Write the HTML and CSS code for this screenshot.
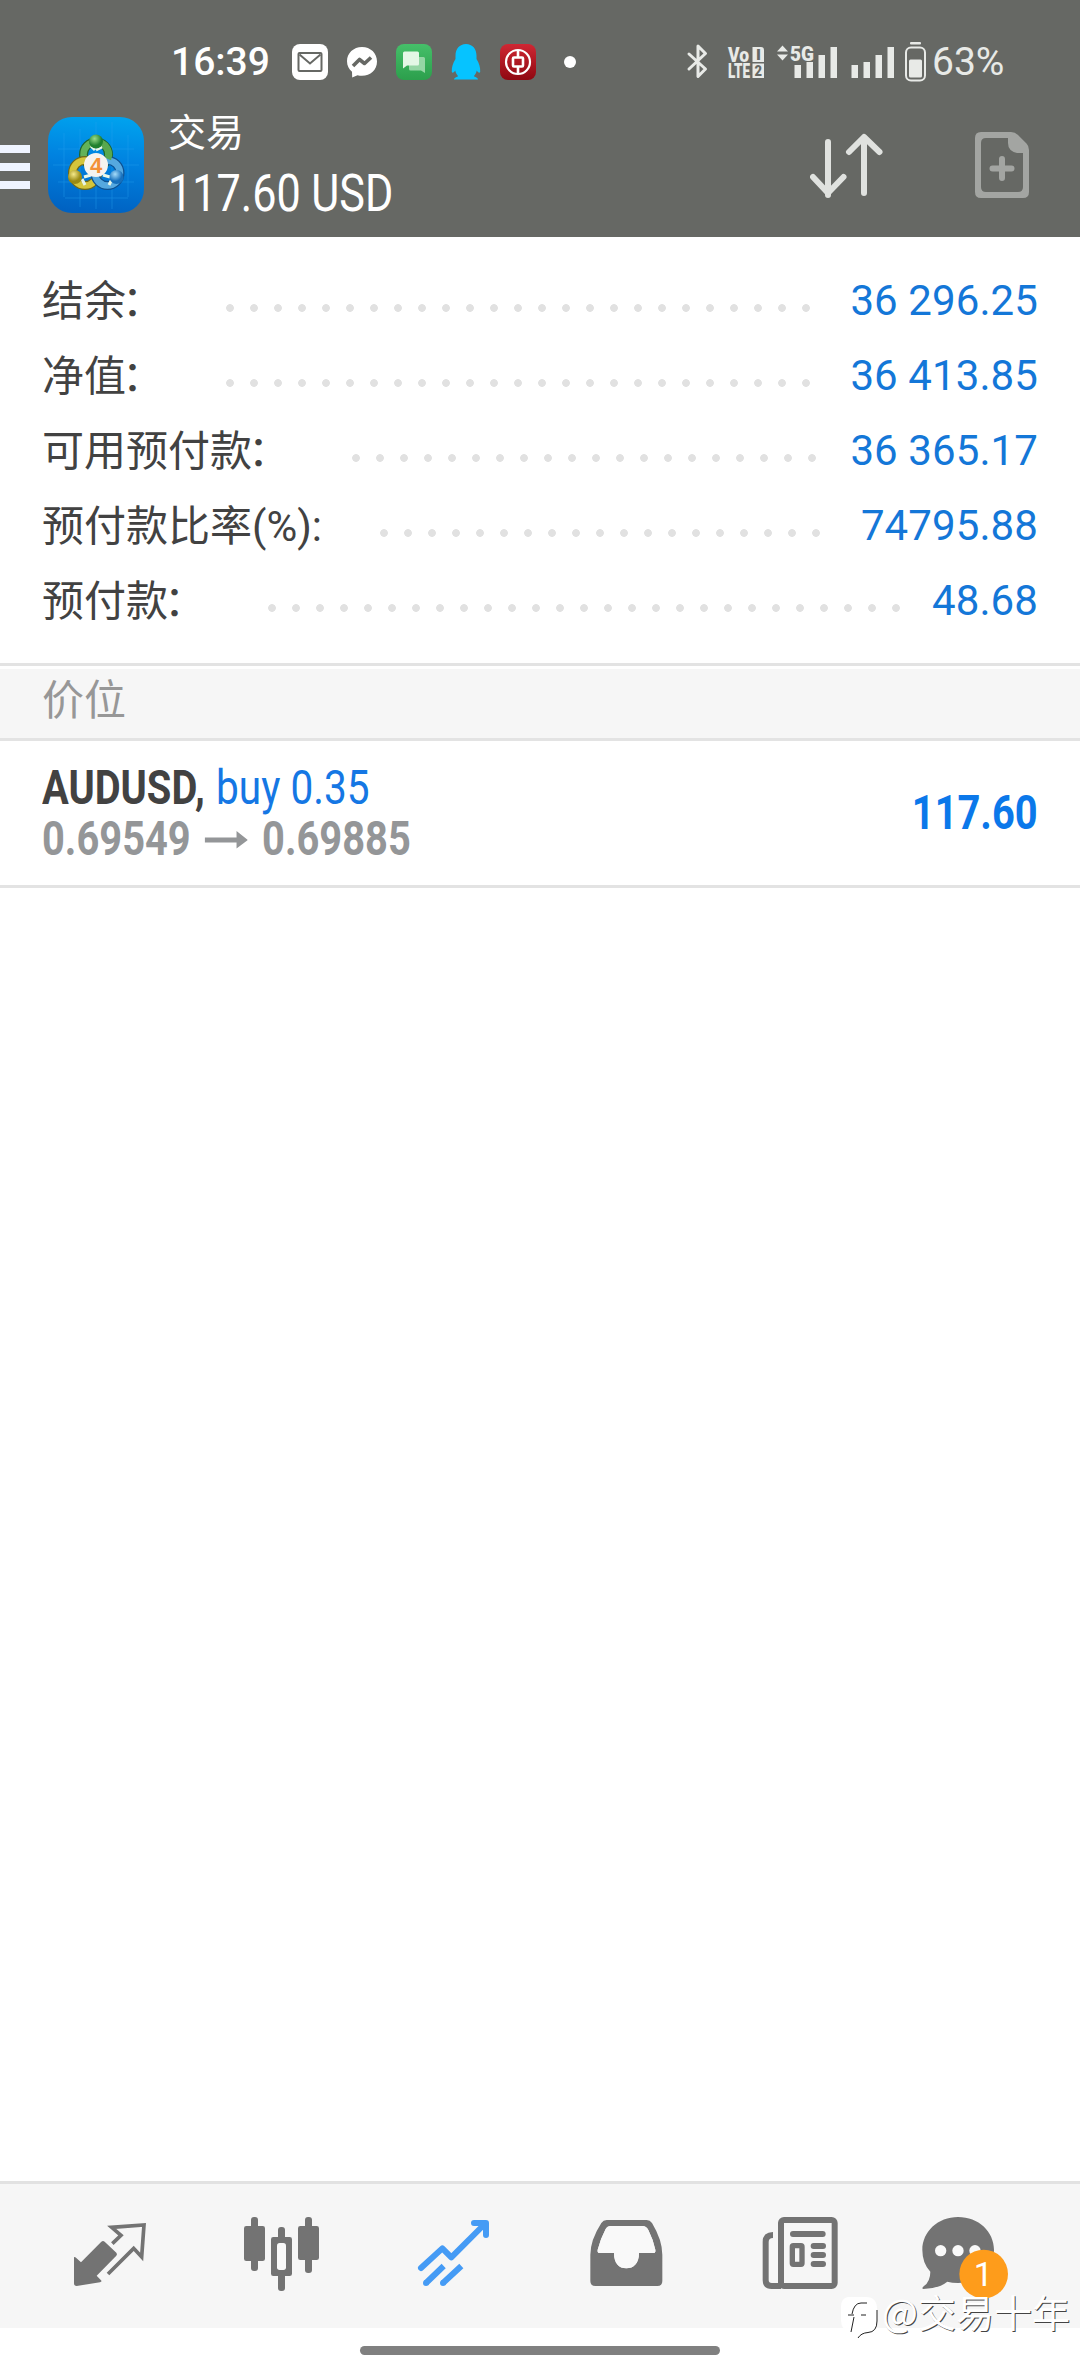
FILE: index.html
```html
<!DOCTYPE html>
<html lang="zh-CN">
<head>
<meta charset="utf-8">
<title>交易</title>
<link rel="stylesheet" href="styles.css">
</head>
<body>
<div class="screen">
  <header class="header">
    <div class="status">
      <div class="status-left">
        <span class="clock">16:39</span>
        <svg class="app-ico" viewBox="0 0 36 36"><rect width="36" height="36" rx="8" fill="#fff"/><rect x="6.5" y="9" width="23" height="18" rx="1" fill="none" stroke="#666864" stroke-width="2"/><path d="M7.500 10.500L18 19.500L28.500 10.500" fill="none" stroke="#666864" stroke-width="2"/></svg>
        <svg class="app-ico" viewBox="0 0 36 36"><path d="M18 3C9.500 3 3 9.200 3 17.200c0 4.600 2.100 8 5 10.600L8.200 33.500l5.300-2.300c1.400.4 3 .6 4.500.6 8.500 0 15-6.200 15-14.400S26.500 3 18 3z" fill="#fff"/><path d="M9 22L15.500 15.500L20.500 19.500L27 13.500" fill="none" stroke="#666864" stroke-width="3.600" stroke-linejoin="round"/></svg>
        <svg class="app-ico" viewBox="0 0 36 36"><defs><linearGradient id="chat" x1="0" y1="0" x2="0" y2="1"><stop offset="0" stop-color="#45bf69"/><stop offset="1" stop-color="#2c9f4c"/></linearGradient></defs><rect width="36" height="36" rx="8" fill="url(#chat)"/><path d="M13 13h14.500a1.500 1.500 0 0 1 1.500 1.500V29l-4-2.500H14.500a1.500 1.500 0 0 1-1.500-1.500z" fill="#95d6a5"/><path d="M8.500 7.500h13A1.500 1.500 0 0 1 23 9v11a1.500 1.500 0 0 1-1.500 1.500H11L7 24.500V9a1.500 1.500 0 0 1 1.500-1.500z" fill="#e4f7e6"/></svg>
        <svg class="app-ico" viewBox="0 0 36 36"><path d="M18 0C11.500 0 7.500 5 7.500 11.500v3.500C5 19 3.500 23 3.800 28c.8 1.500 2.200.5 3.400-1.500.6 2.400 1.600 4.200 3 5.700-2.500.8-4.200 1.800-4.200 3.300h24c0-1.500-1.700-2.500-4.200-3.300 1.400-1.500 2.400-3.300 3-5.700 1.200 2 2.600 3 3.400 1.500.3-5-1.200-9-3.700-13v-3.500C28.500 5 24.500 0 18 0z" fill="#06c3ff"/></svg>
        <svg class="app-ico" viewBox="0 0 36 36"><defs><linearGradient id="bank" x1="0" y1="0" x2="0" y2="1"><stop offset="0" stop-color="#cf2733"/><stop offset="1" stop-color="#8f0811"/></linearGradient></defs><rect width="36" height="36" rx="8" fill="url(#bank)"/><g fill="none" stroke="#fff"><circle cx="18" cy="18" r="12" stroke-width="2.200"/><rect x="13" y="13.500" width="10" height="9" rx="1" stroke-width="2.600"/><path d="M18 6V13M18 23V30" stroke-width="2.600"/></g></svg>
        <i class="more-dot"></i>
      </div>
      <div class="status-right">
        <svg class="signals" viewBox="0 0 242 42" fill="#e8eae7">
          <path d="M3 13L19.500 28L12 35.500V5L19.500 12.500L3 28" fill="none" stroke="#e8eae7" stroke-width="3" stroke-linejoin="round" stroke-linecap="round"/>
          <g class="tiny">
            <text x="42" y="20.500" font-size="20" textLength="21" lengthAdjust="spacingAndGlyphs">Vo</text>
            <text x="42" y="37" font-size="20" textLength="22" lengthAdjust="spacingAndGlyphs">LTE</text>
            <path d="M66.500 6H75q3 0 3 3V21H66.500zM66.500 22.500H78V37H66.500z"/>
            <text x="70" y="19" font-size="15" fill="#666864" textLength="5" lengthAdjust="spacingAndGlyphs">I</text>
            <text x="68.500" y="35" font-size="15" fill="#666864" textLength="7.500" lengthAdjust="spacingAndGlyphs">2</text>
            <text x="104" y="20" font-size="21" textLength="24" lengthAdjust="spacingAndGlyphs">5G</text>
          </g>
          <path d="M91 10.500L96.500 4.500L102 10.500zM91 13.500L96.500 19.500L102 13.500z"/>
          <path d="M108.500 24h6.500v13h-6.500zM120.500 21h6.500v16h-6.500zM132.500 14h6.500v23h-6.500zM144.500 6h6.500v31h-6.500z"/>
          <path d="M165.500 24h6.500v13h-6.500zM177.500 21h6.500v16h-6.500zM189.500 14h6.500v23h-6.500zM201.500 6h6.500v31h-6.500z"/>
          <rect x="224" y="1" width="11" height="2.500" rx="1"/><rect x="220" y="6.500" width="19" height="33" rx="5" fill="none" stroke="#e8eae7" stroke-width="2"/><rect x="223" y="18.500" width="13" height="18" rx="1.500"/>
        </svg>
        <span class="battery">63%</span>
      </div>
    </div>
    <div class="toolbar">
      <div class="burger"><i></i><i></i><i></i></div>
      <svg class="logo" viewBox="0 0 96 96">
        <defs>
          <linearGradient id="lg" x1=".6" y1="0" x2=".5" y2="1"><stop offset="0" stop-color="#00a2ee"/><stop offset=".45" stop-color="#0082e0"/><stop offset="1" stop-color="#0062c2"/></linearGradient>
          <radialGradient id="gr" cx=".4" cy=".3"><stop offset="0" stop-color="#9bdc8a"/><stop offset="1" stop-color="#20802e"/></radialGradient>
          <radialGradient id="ye" cx=".4" cy=".3"><stop offset="0" stop-color="#f5e98a"/><stop offset="1" stop-color="#9a8a14"/></radialGradient>
          <radialGradient id="bl" cx=".4" cy=".3"><stop offset="0" stop-color="#a5dcfa"/><stop offset="1" stop-color="#1670bd"/></radialGradient>
        </defs>
        <rect width="96" height="96" rx="24" fill="url(#lg)"/>
        <path d="M16 16V80M32 12V90M48 5V92M64 5V92M80 18V80M10 32H86M5 48H91M10 65H86M17 81H80" stroke="#27a3f0" stroke-width=".7" opacity=".55"/>
        <g fill="none">
          <circle cx="48" cy="37.500" r="12.500" stroke="#1e642c" stroke-width="9"/><circle cx="48" cy="37.500" r="12.500" stroke="#62b258" stroke-width="6.500"/>
          <circle cx="37" cy="56" r="12.500" stroke="#706818" stroke-width="9"/><circle cx="37" cy="56" r="12.500" stroke="#d4c53c" stroke-width="6.500"/>
          <circle cx="59.500" cy="56" r="12.500" stroke="#0d5090" stroke-width="9"/><circle cx="59.500" cy="56" r="12.500" stroke="#55a8df" stroke-width="6.500"/>
          <path d="M48 25A12.500 12.500 0 0 1 60 42" stroke="#58a84e" stroke-width="6.500"/>
          <path d="M47 33l-4-4M48 33l6-3M34 62l3 6M36 60l7-2M62 60l-7-2M64 62l-3 6" stroke="#e8f6e8" stroke-width="3"/>
        </g>
        <circle cx="48" cy="24.500" r="7" fill="url(#gr)"/><circle cx="27" cy="60" r="7" fill="url(#ye)"/><circle cx="68.500" cy="60" r="7" fill="url(#bl)"/>
        <circle cx="48" cy="48" r="12" fill="#f6f3ef"/>
        <text x="42" y="56" class="logo-num">4</text>
      </svg>
      <div class="titles">
        <div class="title">交易</div>
        <div class="total"><span class="narrow">117.60 USD</span></div>
      </div>
      <svg class="act-sort" viewBox="0 0 76 70" fill="none" stroke="#e0e2df" stroke-width="6" stroke-linecap="round" stroke-linejoin="round"><path d="M18 11V64M3 46L18 62L33.500 46M54 62V8M39 21L54 6L69.500 21"/></svg>
      <svg class="act-new" viewBox="0 0 54 66"><path fill="#a3a5a2" fill-rule="evenodd" d="M6 0H36Q40 0 43 3L51.500 11.500Q54 14 54 18V60Q54 66 48 66H6Q0 66 0 60V6Q0 0 6 0zM11 6Q6 6 6 11V55Q6 60 11 60H43Q48 60 48 55V21H42Q33 19 33 11V6z"/><path d="M27 27V46M17.500 36.500H36.500" stroke="#a3a5a2" stroke-width="6" stroke-linecap="round"/></svg>
    </div>
  </header>

  <section class="summary">
    <div class="row"><span class="label">结余<span class="colon">：</span></span><i class="leader"></i><span class="value">36 296.25</span></div>
    <div class="row"><span class="label">净值<span class="colon">：</span></span><i class="leader"></i><span class="value">36 413.85</span></div>
    <div class="row"><span class="label">可用预付款<span class="colon">：</span></span><i class="leader"></i><span class="value">36 365.17</span></div>
    <div class="row"><span class="label">预付款比率(%):</span><i class="leader"></i><span class="value">74795.88</span></div>
    <div class="row"><span class="label">预付款<span class="colon">：</span></span><i class="leader"></i><span class="value">48.68</span></div>
  </section>

  <div class="section-head">价位</div>

  <div class="position">
    <div class="deal">
      <div class="line symbol"><b class="narrow">AUDUSD,</b><span class="narrow buy">buy 0.35</span></div>
      <div class="line narrow prices"><b>0.69549</b><svg class="arrow" viewBox="0 0 42 18" preserveAspectRatio="none"><path d="M0 6.500H31V0L42 9L31 17.500V11.500H0z" fill="#949698"/></svg><b>0.69885</b></div>
    </div>
    <b class="profit narrow">117.60</b>
  </div>

  <nav class="tabs">
    <svg class="tab" viewBox="-108 -78 516 432" fill="#737373"><path d="M42 142Q44 139 48 143L63 157L124 95Q129 91 134 95L169 128Q173 132 169 137L110 197L123 211Q127 215 120 217L50 228Q42 228 42 220z"/><path d="M157 101L183 76L155 52L252 45L245 141L221 115L144 192" fill="none" stroke="#737373" stroke-width="11"/></svg>
    <svg class="tab" viewBox="408 -78 516 432" fill="#737373"><rect x="573" y="21" width="21" height="162" rx="9"/><rect x="552" y="48" width="63" height="105" rx="7"/><rect x="654" y="51" width="21" height="192" rx="9"/><rect x="633" y="81" width="63" height="117" rx="7"/><rect x="651" y="99" width="27" height="81" rx="8" fill="#f9f9f9"/><rect x="735" y="21" width="21" height="168" rx="9"/><rect x="714" y="48" width="63" height="102" rx="7"/></svg>
    <svg class="tab" viewBox="924 -78 516 432" fill="none" stroke="#459bf5" stroke-width="18"><path d="M1083 174L1147 115L1174 142L1274 42M1242 39H1278V75" stroke-linecap="round" stroke-linejoin="round"/><path d="M1098 219L1151 168M1149 219L1204 168"/><path d="M1098 219h.1M1149 219h.1" stroke-linecap="round"/></svg>
    <svg class="tab" viewBox="-120 -48 516 432"><path fill="#737373" fill-rule="evenodd" d="M80 60H200Q210 60 216 69Q247 120 247 165V243Q247 258 232 258H46Q31 258 31 243V165Q31 120 64 69Q70 60 80 60zM92 78Q82 78 77 87Q62 115 53 149Q51 159 60 159H102C102 190 117 205 139 205C161 205 177 190 177 159H219Q228 159 226 149Q220 120 205 90Q199 78 187 78z"/><path fill="#f9f9f9" d="M92 78Q82 78 77 87Q62 115 53 149Q51 159 60 159H102C102 190 117 205 139 205C161 205 177 190 177 159H219Q228 159 226 149Q220 120 205 90Q199 78 187 78z"/></svg>
    <svg class="tab" viewBox="396 -48 516 432" fill="none" stroke="#737373" stroke-width="18"><path d="M579 105Q557 105 557 126V240Q557 258 575 258H603"/><rect x="603" y="60" width="161" height="198" rx="9"/><path d="M639 102H728M701 138H729M701 165H729M701 192H729" stroke-linecap="round"/><rect x="637" y="137" width="29" height="56" rx="3" stroke-width="16"/></svg>
    <svg class="tab" viewBox="912 -48 516 432"><path fill="#737373" d="M1134 51C1196 51 1242 95 1242 150C1242 205 1196 249 1134 249Q1116 249 1102 245Q1075 266 1030 267Q1024 266 1031 259Q1051 245 1051 215Q1027 190 1027 150C1027 95 1074 51 1134 51z"/><circle cx="1082" cy="152" r="17" fill="#f9f9f9"/><circle cx="1134" cy="152" r="17" fill="#f9f9f9"/><circle cx="1185" cy="152" r="17" fill="#f9f9f9"/><circle cx="1211" cy="222" r="73" fill="#fe9c1b"/><text x="1181" y="258" class="badge-num">1</text></svg>
  </nav>
  <div class="home"><i></i></div>

  <div class="watermark">
    <svg viewBox="0 0 38 44"><path d="M8 1H26Q37 1 37 13V25Q37 37 27 37Q22 37 18 42V36L10 37Q1 34 1 24V11Q1 2 8 1z" fill="#fff"/><g fill="none" stroke="#222" stroke-width="1"><path d="M37 14V25Q37 36 28 36.500Q21 37 18 42M11 36L14 21M8 19H14M12 18Q14 7 21 7H27M21 19H26"/></g></svg>
    <span>@交易十年</span>
  </div>
</div>
</body>
</html>
```
FILE: styles.css
```css
* { box-sizing: border-box; }
body {
  margin: 0;
  background: #fff;
  font-family: Roboto, "Noto Sans CJK SC", sans-serif;
}
svg { display: block; flex: none; }
i { display: block; }
.screen {
  position: relative;
  display: flex;
  flex-direction: column;
  width: 1080px;
  height: 2376px;
  overflow: hidden;
}

/* header */
.header { height: 237px; background: #666864; color: #fff; }
.status {
  display: flex;
  justify-content: space-between;
  height: 105px;
  padding: 38px 74px 0 171px;
}
.status-left, .status-right { display: flex; align-items: center; height: 47px; }
.status-left { gap: 16px; }
.clock { width: 105px; padding-top: 2px; font-size: 39px; font-weight: 500; line-height: 47px; }
.app-ico { width: 36px; height: 36px; }
.more-dot { width: 12px; height: 12px; margin-left: 12px; border-radius: 50%; background: #fff; }
.signals { width: 242px; height: 42px; }
.tiny { font-weight: 900; }
.battery { width: 74px; margin-left: 4px; padding-top: 2px; font-size: 39px; line-height: 47px; color: #e8eae7; white-space: nowrap; }

.toolbar { display: flex; align-items: flex-start; height: 132px; }
.burger { display: flex; flex-direction: column; gap: 10px; width: 30px; margin-top: 40px; }
.burger i { height: 8px; background: #eff4ff; }
.logo { width: 96px; height: 96px; margin: 12px 0 0 18px; }
.logo-num { font: 700 22px "Liberation Sans", sans-serif; fill: #f39136; }
.titles { flex: 1; margin: 0 0 0 24px; }
.title { height: 59px; font-size: 38px; line-height: 56px; }
.total { height: 60px; font-size: 52px; line-height: 60px; }
.narrow { display: inline-block; transform: scaleX(.83); transform-origin: left; white-space: nowrap; }
.act-sort { width: 76px; height: 70px; margin-top: 26px; }
.act-new { width: 54px; height: 66px; margin: 27px 51px 0 89px; }

/* account summary */
.summary { height: 426px; padding: 26px 42px 0 42px; }
.row { display: flex; height: 75px; font-size: 42px; line-height: 75px; }
.label { padding-top: 1px; color: #424242; }
.colon { margin: 0 4px 0 -4px; }
.leader {
  flex: 1;
  margin: 0 30px 0 58px;
  background: radial-gradient(circle at 4px 45px, #e1e1e1 3.5px, transparent 4.2px) 0 0 / 24px 75px repeat-x;
}
.value { letter-spacing: .1px; color: #1477d8; }

.section-head {
  height: 78px;
  padding-left: 42px;
  border: solid #e3e3e3;
  border-width: 3px 0;
  background: linear-gradient(#fff 3px, #f6f6f6 3px);
  font-size: 42px;
  line-height: 70px;
  color: #979797;
}

/* open position */
.position {
  display: flex;
  justify-content: space-between;
  height: 147px;
  padding: 21px 42px 0 42px;
  border-bottom: 3px solid #e3e3e3;
  font-size: 48px;
}
.deal { display: flex; flex-direction: column; align-items: flex-start; }
.line { height: 51px; line-height: 52px; color: #424242; }
.symbol { display: flex; }
.symbol b { width: 174px; }
.symbol .buy { color: #1577e4; transform: scaleX(.845); }
.prices { display: flex; color: #949698; }
.arrow { width: 52px; height: 18px; margin: 18px 17px 0; }
.profit { line-height: 102px; color: #0b78ea; transform-origin: right; }

/* bottom navigation */
.tabs {
  display: flex;
  height: 147px;
  margin-top: auto;
  padding: 0 24px;
  border-top: 3px solid #e2e2e2;
  background: #f6f6f6;
}
.tab { width: 172px; height: 144px; }
.badge-num { font: 102px Roboto, sans-serif; fill: #fff; }
.home { height: 48px; padding: 18px 360px 0; }
.home i { height: 9px; border-radius: 5px; background: #808080; }

.watermark {
  position: absolute;
  left: 840px;
  top: 2292px;
  display: flex;
  gap: 4px;
}
.watermark svg { width: 38px; height: 44px; margin-top: 4px; }
.watermark span {
  font: 38px/38px "Noto Sans CJK SC", sans-serif;
  color: #fff;
  text-shadow: 1px 1px 0 #444;
  white-space: nowrap;
}
```
